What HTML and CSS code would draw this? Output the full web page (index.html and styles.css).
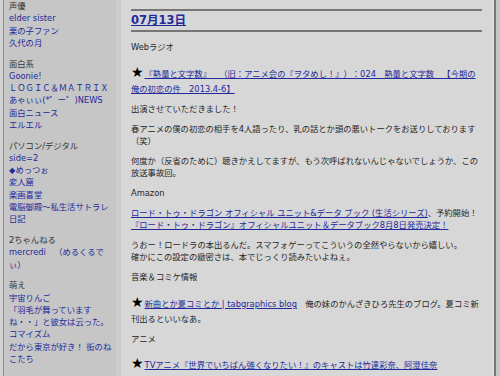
FILE: index.html
```html
<!DOCTYPE html>
<html lang="ja">
<head>
    <meta charset="UTF-8">
    <meta name="viewport" content="width=device-width, initial-scale=1.0">
    <title>07月13日</title>
    <link rel="stylesheet" href="styles.css">
</head>
<body>
    <div class="page">
        <div class="edge-left"></div>

        <div class="sidebar">
            <div class="side-box">
                <div class="side-title">声優</div>
                <a href="#">elder sister</a>
                <a href="#">栗の子ファン</a>
                <a href="#">久代の月</a>
            </div>
            <div class="side-box">
                <div class="side-title">面白系</div>
                <a href="#">Goonie!</a>
                <a href="#">ＬＯＧＩＣ＆ＭＡＴＲＩＸ</a>
                <a href="#">あゃぃぃ(*゜ー゜)NEWS</a>
                <a href="#">面白ニュース</a>
                <a href="#">エルエル</a>
            </div>
            <div class="side-box">
                <div class="side-title">パソコン/デジタル</div>
                <a href="#">side=2</a>
                <a href="#">◆めっつぉ</a>
                <a href="#">変人窟</a>
                <a href="#">楽画喜堂</a>
                <a href="#">電脳御殿〜私生活サトラレ</a>
                <a href="#">日記</a>
            </div>
            <div class="side-box">
                <div class="side-title">2ちゃんねる</div>
                <a href="#">mercredi　（めるくるでぃ）</a>
            </div>
            <div class="side-box">
                <div class="side-title">萌え</div>
                <a href="#">宇宙りんご</a>
                <a href="#">「羽毛が舞っていますね・・」と彼女は云った。</a>
                <a href="#">コマイズム</a>
                <a href="#">だから東京が好き！ 街のねこたち</a>
            </div>
        </div>

        <div class="gutter"></div>

        <div class="main">
            <h2 class="date"><a href="#">07月13日</a></h2>

            <p>Webラジオ</p>
            <p class="entry"><span class="star">★</span><a href="#">『熱量と文字数』　（旧：アニメ会の『ヲタめし！』）：024　熱量と文字数　【今期の俺の初恋の件　2013.4-6】</a></p>
            <p>出演させていただきました！</p>
            <p>春アニメの僕の初恋の相手を4人語ったり、乳の話とか頭の悪いトークをお送りしております（笑）</p>
            <p>何度か（反省のために）聴きかえしてますが、もう次呼ばれないんじゃないでしょうか、この放送事故回。</p>

            <p>Amazon</p>
            <p><a href="#">ロード・トゥ・ドラゴン オフィシャル ユニット&amp;データ ブック (生活シリーズ)</a>、予約開始！<br>
            <a href="#">『ロード・トゥ・ドラゴン』オフィシャルユニット＆データブック8月8日発売決定！</a></p>
            <p>うおー！ロードラの本出るんだ。スマフォゲーってこういうの全然やらないから嬉しい。<br>
            確かにこの設定の緻密さは、本でじっくり読みたいよねぇ。</p>

            <p>音楽＆コミケ情報</p>
            <p class="entry"><span class="star">★</span><a href="#">新曲とか夏コミとか | tabgraphics blog</a>　俺の妹のかんざきひろ先生のブログ。夏コミ新刊出るといいなあ。</p>

            <p>アニメ</p>
            <p class="entry"><span class="star">★</span><a href="#">TVアニメ『世界でいちばん強くなりたい！』のキャストは竹達彩奈、阿澄佳奈</a></p>
            <p class="entry"><span class="star">★</span><a href="#">TVアニメ『ステラ女学院高等科C³部』PV公開</a></p>
        </div>

        <div class="edge-right"></div>
    </div>
</body>
</html>
```

FILE: styles.css
```css
body {
    margin: 0;
    font-family: "DejaVu Sans", "Noto Sans CJK JP", sans-serif;
    font-size: 8.3px;
    line-height: 1.48;
    color: #262626;
    background-color: #c6c6c6;
    text-spacing-trim: space-all;
}

a {
    color: #22299a;
    text-decoration: none;
}

.page {
    display: flex;
    height: 376px;
    overflow: hidden;
}

.edge-left {
    width: 3px;
    background-color: #d2d2d2;
    border-right: 1px solid #8e8e8e;
    flex-shrink: 0;
}

.sidebar {
    width: 104px;
    padding: 0 3px 0 5px;
    flex-shrink: 0;
}

.side-box {
    margin-bottom: 8.5px;
}

.side-title {
    color: #333;
}

.side-box a {
    display: block;
}

.gutter {
    width: 5px;
    background-color: #cccccc;
    flex-shrink: 0;
}

.main {
    width: 351px;
    padding: 9px 10px 0;
    background-color: #d7d7d7;
    flex-shrink: 0;
}

.date {
    margin: 0 0 9px;
    border-top: 2px solid #767676;
    border-bottom: 2px solid #767676;
    font-size: 11.5px;
    line-height: 19px;
}

.date a,
.main p a {
    text-decoration: underline;
}

.main p {
    margin: 0 0 7.7px;
}

.main p.entry {
    line-height: 15px;
    margin-top: 12.3px;
    margin-bottom: 6px;
}

.star {
    font-size: 14px;
    line-height: 12px;
    margin-right: 1px;
    color: #000;
}

.edge-right {
    width: 2px;
    background-color: #dedede;
    border-right: 2px solid #787878;
    flex-shrink: 0;
}
```
